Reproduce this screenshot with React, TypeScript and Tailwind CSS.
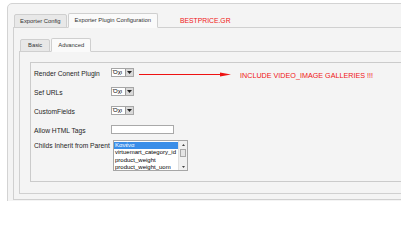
import React from "react";

const tabBase = "flex items-center border border-[#cfcfcf] rounded-t-[2px] px-[5px] text-[5.85px] text-[#333]";

export default function App() {
  return (
    <div className="w-[401px] h-[201px] overflow-hidden bg-white pl-[7px] pt-[3px] font-['Liberation_Sans',Arial,sans-serif]">
      {/* Outer panel */}
      <div className="w-[420px] h-[260px] rounded-tl-[5px] border border-[#d3d3d3] bg-[#f4f4f4] pl-[5px] pt-[9px]">
        {/* Main tabs */}
        <div className="relative z-10 -mb-px flex h-[15px] items-end pl-px">
          <div className={`${tabBase} h-[14px] bg-[#e8e8e8]`}>Exporter Config</div>
          <div className={`${tabBase} ml-px h-[15px] border-b-[#fafafa] bg-[#fafafa] px-[6px]`}>
            Exporter Plugin Configuration
          </div>
          <span className="ml-[22px] self-center pt-px text-[6.8px] text-[#f01414]">BESTPRICE.GR</span>
        </div>

        {/* Tab panel */}
        <div className="border border-[#d0d0d0] bg-[#f4f4f4] pl-[5px] pt-[10px] pb-[5px]">
          {/* Sub tabs */}
          <div className="relative z-10 -mb-px flex h-[14px] items-end pl-px">
            <div className={`${tabBase} h-[13px] bg-[#e8e8e8] px-[7px]`}>Basic</div>
            <div className={`${tabBase} ml-px h-[14px] border-b-[#fafafa] bg-[#fafafa] px-[6px]`}>Advanced</div>
          </div>

          {/* Sub panel */}
          <div className="border border-[#d0d0d0] bg-[#f4f4f4] pl-[10px] pt-[10px] pb-[11px]">
            <fieldset className="border border-[#cbcbcb] pl-[3px] pt-[5px] pb-[10px]">
              <Row label="Render Conent Plugin" height="h-[19px]">
                <Select />
                <svg className="ml-[5px] mt-[4px]" width="92" height="5" viewBox="0 0 92 5" aria-hidden>
                  <line x1="0" y1="2.5" x2="84" y2="2.5" stroke="#ee1111" strokeWidth="1.2" />
                  <path d="M81 0.6L92 2.5L81 4.4z" fill="#ee1111" />
                </svg>
                <span className="ml-[9px] mt-[3px] whitespace-nowrap text-[7.2px] leading-[9px] text-[#f01414]">
                  INCLUDE VIDEO_IMAGE GALLERIES !!!
                </span>
              </Row>
              <Row label="Sef URLs" height="h-[19px]">
                <Select />
              </Row>
              <Row label="CustomFields" height="h-[19px]">
                <Select />
              </Row>
              <Row label="Allow HTML Tags" height="h-[15px]">
                <div className="h-[9px] w-[63px] border border-[#a9a9a9] bg-white" />
              </Row>
              <Row label="Childs Inherit from Parent" height="h-[31px]">
                <ListBox />
              </Row>
            </fieldset>
          </div>
        </div>
      </div>
    </div>
  );
}

function Row({ label, height, children }: { label: string; height: string; children: React.ReactNode }) {
  return (
    <div className={`flex items-start ${height}`}>
      <span className="mt-[1px] w-[77px] shrink-0 whitespace-nowrap text-[6.7px] leading-[9px] text-[#1e1e1e]">
        {label}
      </span>
      {children}
    </div>
  );
}

function Select() {
  return (
    <div className="flex h-[9px] w-[23px] border border-[#a6a6a6] bg-white">
      <span className="w-[13px] overflow-hidden whitespace-nowrap pl-px text-[6px] leading-[7px] text-black">Όχι</span>
      <span className="flex w-[8px] items-center justify-center border-l border-[#9a9a9a] bg-[#d9d9d9]">
        <svg width="5" height="3" viewBox="0 0 5 3" aria-hidden>
          <path d="M0 0h5L2.5 3z" fill="#222" />
        </svg>
      </span>
    </div>
  );
}

function ListBox() {
  const items = ["virtuemart_category_id", "product_weight", "product_weight_uom"];
  return (
    <div className="ml-[2px] flex h-[31px] w-[75px] border border-[#a6a6a6] bg-white">
      <div className="flex-1 overflow-hidden pt-px text-[6px] leading-[7.3px] text-black">
        <div className="bg-[#3a8ee8] pl-[1px] text-white">Κανένα</div>
        {items.map((t) => (
          <div key={t} className="whitespace-nowrap pl-[1px]">
            {t}
          </div>
        ))}
      </div>
      <div className="flex w-[9px] flex-col border-l border-[#e0e0e0] bg-[#f0f0f0]">
        <div className="flex h-[7px] items-center justify-center">
          <svg width="3" height="2" viewBox="0 0 3 2" aria-hidden>
            <path d="M0 2h3L1.5 0z" fill="#444" />
          </svg>
        </div>
        <div className="mx-[1px] mt-[1px] h-[8px] border border-[#a8a8a8] bg-[#e4e4e4]" />
        <div className="flex-1" />
        <div className="flex h-[7px] items-center justify-center">
          <svg width="3" height="2" viewBox="0 0 3 2" aria-hidden>
            <path d="M0 0h3L1.5 2z" fill="#444" />
          </svg>
        </div>
      </div>
    </div>
  );
}
